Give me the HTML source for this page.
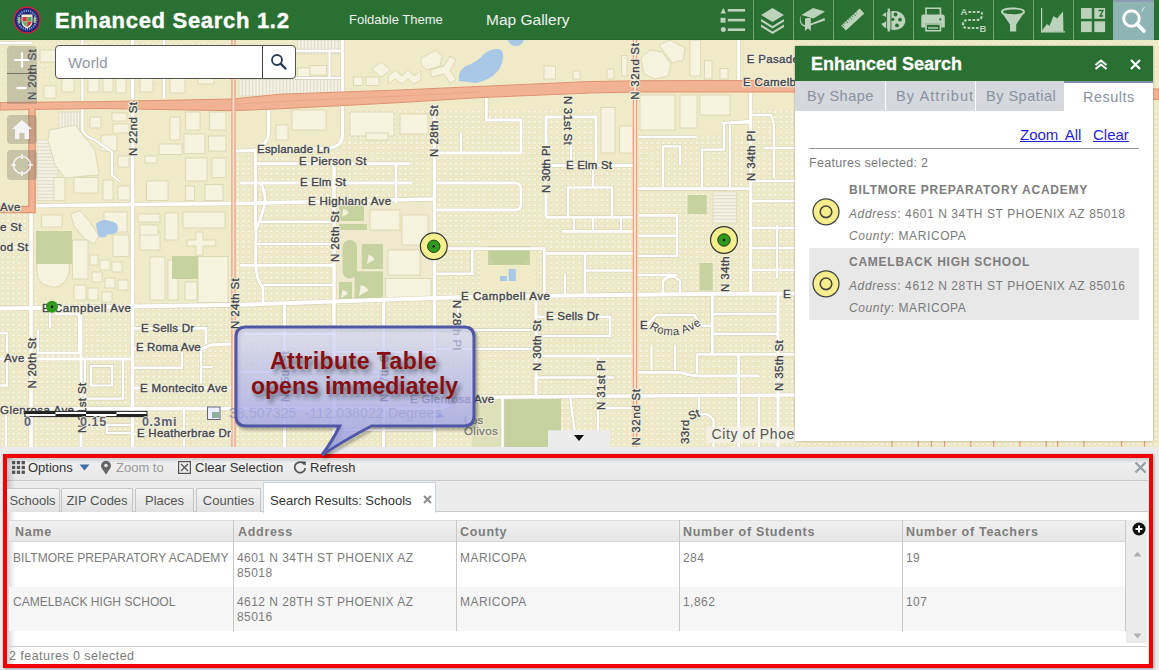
<!DOCTYPE html>
<html><head><meta charset="utf-8">
<style>
*{box-sizing:border-box;margin:0;padding:0}
html,body{width:1159px;height:670px;overflow:hidden;background:#ebebeb;font-family:"Liberation Sans",sans-serif}
.abs{position:absolute}
#map{position:absolute;left:0;top:40px;width:1159px;height:407px;overflow:hidden;background:#eeeacb}
#hdr{position:absolute;left:0;top:0;width:1159px;height:40px;background:#2a7033;border-bottom:1px solid #236b2b}
#title{position:absolute;left:55px;top:8px;-webkit-text-stroke:0.4px #fff;font:bold 22px "Liberation Sans",sans-serif;letter-spacing:0.7px;color:#fff;white-space:nowrap}
.hlink{position:absolute;color:#f0f0f0;white-space:nowrap}
.dv{position:absolute;top:0;width:1px;height:40px;background:#6ea571}
#panel{position:absolute;left:795px;top:46px;width:358px;height:395px;background:#fff;box-shadow:0 0 2px rgba(0,0,0,.35)}
.ptab{position:absolute;top:35px;height:30px;background:#d5d8dc;color:#8a92a2;font-size:14.5px;letter-spacing:0.5px;white-space:nowrap;overflow:hidden;line-height:30px}
.gt{color:#7a7a7a;white-space:nowrap;position:absolute}
.it{font-style:italic}
#att{position:absolute;left:0;top:447px;width:1159px;height:223px;background:#ebebeb}
.cell{position:absolute;font-size:12px;color:#7b7b7b;white-space:nowrap;line-height:15px;letter-spacing:0.45px}
.hcell{position:absolute;font:bold 12.5px "Liberation Sans",sans-serif;color:#7d7d7d;letter-spacing:0.7px;white-space:nowrap;top:525px}
.ttab{position:absolute;top:488px;height:24px;background:linear-gradient(#f4f4f4,#e2e2e2);border:1px solid #c6c6c6;border-bottom:none;font-size:13px;color:#555;line-height:23px;text-align:center;white-space:nowrap;border-radius:2px 2px 0 0}
.tbt{position:absolute;top:460px;font-size:13px;color:#333;white-space:nowrap;line-height:16px}
.ml{position:absolute;font-size:11.5px;color:#5d6068;white-space:nowrap;letter-spacing:0.9px;line-height:12px}
.mlv{position:absolute;font-size:11.5px;color:#5d6068;white-space:nowrap;letter-spacing:0.9px;line-height:12px;transform-origin:0 0}
</style></head><body>

<div id="map">
<svg id="msvg" width="1159" height="407" viewBox="0 40 1159 407" style="position:absolute;left:0;top:0">
<rect x="0" y="40" width="1159" height="407" fill="#efebc8"/>
<defs>
<pattern id="houses" x="0" y="0" width="5.6" height="5.2" patternUnits="userSpaceOnUse">
<rect x="0.9" y="0.9" width="3.4" height="2.8" fill="#faf7e3" stroke="#dcd6b0" stroke-width="0.5"/>
</pattern>
</defs>
<rect x="0" y="110" width="1159" height="337" fill="url(#houses)"/>
<rect x="0" y="40" width="1159" height="45" fill="url(#houses)" opacity="0.5"/>
<rect x="36" y="110" width="196" height="95" fill="#efebc8" />
<rect x="0" y="110" width="31" height="95" fill="#efebc8" />
<rect x="134" y="208" width="98" height="95" fill="#efebc8" />
<rect x="36" y="208" width="95" height="95" fill="#efebc8" />
<rect x="336" y="205" width="98" height="95" fill="#efebc8" />
<rect x="234" y="40" width="246" height="46" fill="#efebc8" />
<rect x="480" y="40" width="154" height="42" fill="#efebc8" />
<rect x="636" y="40" width="159" height="40" fill="#efebc8" />
<rect x="598" y="95" width="36" height="65" fill="#efebc8" />
<rect x="636" y="92" width="112" height="43" fill="#efebc8" />
<rect x="472" y="397" width="30" height="50" fill="#efebc8" />
<rect x="234" y="110" width="106" height="40" fill="#efebc8" />
<rect x="480" y="240" width="55" height="50" fill="#efebc8" />
<rect x="334" y="203" width="100" height="97" fill="#efeacd" />
<rect x="59" y="112" width="20.5" height="18" fill="#f3f0e4" stroke="#d8d3bc" stroke-width="0.6"/>
<path d="M62.0,112 V130" stroke="#d2cdb4" stroke-width="0.6"/>
<path d="M65.0,112 V130" stroke="#d2cdb4" stroke-width="0.6"/>
<path d="M68.0,112 V130" stroke="#d2cdb4" stroke-width="0.6"/>
<path d="M71.0,112 V130" stroke="#d2cdb4" stroke-width="0.6"/>
<path d="M74.0,112 V130" stroke="#d2cdb4" stroke-width="0.6"/>
<path d="M77.0,112 V130" stroke="#d2cdb4" stroke-width="0.6"/>
<rect x="37" y="140" width="21" height="60.5" fill="#f3f0e4" stroke="#d8d3bc" stroke-width="0.6"/>
<path d="M37,143.4 H58" stroke="#d2cdb4" stroke-width="0.6"/>
<path d="M37,146.8 H58" stroke="#d2cdb4" stroke-width="0.6"/>
<path d="M37,150.2 H58" stroke="#d2cdb4" stroke-width="0.6"/>
<path d="M37,153.6 H58" stroke="#d2cdb4" stroke-width="0.6"/>
<path d="M37,157.0 H58" stroke="#d2cdb4" stroke-width="0.6"/>
<path d="M37,160.4 H58" stroke="#d2cdb4" stroke-width="0.6"/>
<path d="M37,163.8 H58" stroke="#d2cdb4" stroke-width="0.6"/>
<path d="M37,167.2 H58" stroke="#d2cdb4" stroke-width="0.6"/>
<path d="M37,170.6 H58" stroke="#d2cdb4" stroke-width="0.6"/>
<path d="M37,174.0 H58" stroke="#d2cdb4" stroke-width="0.6"/>
<path d="M37,177.4 H58" stroke="#d2cdb4" stroke-width="0.6"/>
<path d="M37,180.8 H58" stroke="#d2cdb4" stroke-width="0.6"/>
<path d="M37,184.2 H58" stroke="#d2cdb4" stroke-width="0.6"/>
<path d="M37,187.6 H58" stroke="#d2cdb4" stroke-width="0.6"/>
<path d="M37,191.0 H58" stroke="#d2cdb4" stroke-width="0.6"/>
<path d="M37,194.4 H58" stroke="#d2cdb4" stroke-width="0.6"/>
<path d="M37,197.8 H58" stroke="#d2cdb4" stroke-width="0.6"/>
<rect x="239" y="78.4" width="104" height="17.599999999999994" fill="#f3f0e4" stroke="#d8d3bc" stroke-width="0.6"/>
<path d="M242.4,78.4 V96" stroke="#d2cdb4" stroke-width="0.6"/>
<path d="M245.8,78.4 V96" stroke="#d2cdb4" stroke-width="0.6"/>
<path d="M249.2,78.4 V96" stroke="#d2cdb4" stroke-width="0.6"/>
<path d="M252.6,78.4 V96" stroke="#d2cdb4" stroke-width="0.6"/>
<path d="M256.0,78.4 V96" stroke="#d2cdb4" stroke-width="0.6"/>
<path d="M259.4,78.4 V96" stroke="#d2cdb4" stroke-width="0.6"/>
<path d="M262.8,78.4 V96" stroke="#d2cdb4" stroke-width="0.6"/>
<path d="M266.2,78.4 V96" stroke="#d2cdb4" stroke-width="0.6"/>
<path d="M269.6,78.4 V96" stroke="#d2cdb4" stroke-width="0.6"/>
<path d="M273.0,78.4 V96" stroke="#d2cdb4" stroke-width="0.6"/>
<path d="M276.4,78.4 V96" stroke="#d2cdb4" stroke-width="0.6"/>
<path d="M279.8,78.4 V96" stroke="#d2cdb4" stroke-width="0.6"/>
<path d="M283.2,78.4 V96" stroke="#d2cdb4" stroke-width="0.6"/>
<path d="M286.6,78.4 V96" stroke="#d2cdb4" stroke-width="0.6"/>
<path d="M290.0,78.4 V96" stroke="#d2cdb4" stroke-width="0.6"/>
<path d="M293.4,78.4 V96" stroke="#d2cdb4" stroke-width="0.6"/>
<path d="M296.8,78.4 V96" stroke="#d2cdb4" stroke-width="0.6"/>
<path d="M300.2,78.4 V96" stroke="#d2cdb4" stroke-width="0.6"/>
<path d="M303.6,78.4 V96" stroke="#d2cdb4" stroke-width="0.6"/>
<path d="M307.0,78.4 V96" stroke="#d2cdb4" stroke-width="0.6"/>
<path d="M310.4,78.4 V96" stroke="#d2cdb4" stroke-width="0.6"/>
<path d="M313.8,78.4 V96" stroke="#d2cdb4" stroke-width="0.6"/>
<path d="M317.2,78.4 V96" stroke="#d2cdb4" stroke-width="0.6"/>
<path d="M320.6,78.4 V96" stroke="#d2cdb4" stroke-width="0.6"/>
<path d="M324.0,78.4 V96" stroke="#d2cdb4" stroke-width="0.6"/>
<path d="M327.4,78.4 V96" stroke="#d2cdb4" stroke-width="0.6"/>
<path d="M330.8,78.4 V96" stroke="#d2cdb4" stroke-width="0.6"/>
<path d="M334.2,78.4 V96" stroke="#d2cdb4" stroke-width="0.6"/>
<path d="M337.6,78.4 V96" stroke="#d2cdb4" stroke-width="0.6"/>
<path d="M341.0,78.4 V96" stroke="#d2cdb4" stroke-width="0.6"/>
<rect x="297.5" y="40" width="46.5" height="14" fill="#f3f0e4" stroke="#d8d3bc" stroke-width="0.6"/>
<path d="M300.9,40 V54" stroke="#d2cdb4" stroke-width="0.6"/>
<path d="M304.3,40 V54" stroke="#d2cdb4" stroke-width="0.6"/>
<path d="M307.7,40 V54" stroke="#d2cdb4" stroke-width="0.6"/>
<path d="M311.1,40 V54" stroke="#d2cdb4" stroke-width="0.6"/>
<path d="M314.5,40 V54" stroke="#d2cdb4" stroke-width="0.6"/>
<path d="M317.9,40 V54" stroke="#d2cdb4" stroke-width="0.6"/>
<path d="M321.3,40 V54" stroke="#d2cdb4" stroke-width="0.6"/>
<path d="M324.7,40 V54" stroke="#d2cdb4" stroke-width="0.6"/>
<path d="M328.1,40 V54" stroke="#d2cdb4" stroke-width="0.6"/>
<path d="M331.5,40 V54" stroke="#d2cdb4" stroke-width="0.6"/>
<path d="M334.9,40 V54" stroke="#d2cdb4" stroke-width="0.6"/>
<path d="M338.3,40 V54" stroke="#d2cdb4" stroke-width="0.6"/>
<path d="M341.7,40 V54" stroke="#d2cdb4" stroke-width="0.6"/>
<rect x="713" y="192" width="23.600000000000023" height="31" fill="#f3f0e4" stroke="#d8d3bc" stroke-width="0.6"/>
<path d="M713,195.4 H736.6" stroke="#d2cdb4" stroke-width="0.6"/>
<path d="M713,198.8 H736.6" stroke="#d2cdb4" stroke-width="0.6"/>
<path d="M713,202.2 H736.6" stroke="#d2cdb4" stroke-width="0.6"/>
<path d="M713,205.6 H736.6" stroke="#d2cdb4" stroke-width="0.6"/>
<path d="M713,209.0 H736.6" stroke="#d2cdb4" stroke-width="0.6"/>
<path d="M713,212.4 H736.6" stroke="#d2cdb4" stroke-width="0.6"/>
<path d="M713,215.8 H736.6" stroke="#d2cdb4" stroke-width="0.6"/>
<path d="M713,219.2 H736.6" stroke="#d2cdb4" stroke-width="0.6"/>
<rect x="90" y="117" width="11" height="11" fill="#f6f3de" stroke="#d6d0a8" stroke-width="0.7"/>
<rect x="112" y="113" width="15" height="8" fill="#f6f3de" stroke="#d6d0a8" stroke-width="0.7"/>
<rect x="113" y="124" width="16" height="9" fill="#f6f3de" stroke="#d6d0a8" stroke-width="0.7"/>
<rect x="101" y="135" width="16" height="16" fill="#f6f3de" stroke="#d6d0a8" stroke-width="0.7"/>
<rect x="118" y="156" width="11" height="11" fill="#f6f3de" stroke="#d6d0a8" stroke-width="0.7"/>
<rect x="54" y="177.5" width="11" height="23.0" fill="#f6f3de" stroke="#d6d0a8" stroke-width="0.7"/>
<rect x="74" y="177.5" width="24" height="15.5" fill="#f6f3de" stroke="#d6d0a8" stroke-width="0.7"/>
<rect x="170" y="117" width="10" height="23" fill="#f6f3de" stroke="#d6d0a8" stroke-width="0.7"/>
<rect x="185.6" y="112" width="14.400000000000006" height="18" fill="#f6f3de" stroke="#d6d0a8" stroke-width="0.7"/>
<rect x="209.5" y="112" width="16.5" height="18" fill="#f6f3de" stroke="#d6d0a8" stroke-width="0.7"/>
<rect x="184" y="134" width="21" height="19.599999999999994" fill="#f6f3de" stroke="#d6d0a8" stroke-width="0.7"/>
<rect x="208.6" y="136" width="17.400000000000006" height="15" fill="#f6f3de" stroke="#d6d0a8" stroke-width="0.7"/>
<rect x="159" y="144" width="23" height="10.5" fill="#f6f3de" stroke="#d6d0a8" stroke-width="0.7"/>
<rect x="145" y="156" width="12" height="7" fill="#f6f3de" stroke="#d6d0a8" stroke-width="0.7"/>
<rect x="185.6" y="158" width="21.400000000000006" height="23" fill="#f6f3de" stroke="#d6d0a8" stroke-width="0.7"/>
<rect x="212" y="158" width="14" height="19.5" fill="#f6f3de" stroke="#d6d0a8" stroke-width="0.7"/>
<rect x="146.7" y="181" width="21.30000000000001" height="19.5" fill="#f6f3de" stroke="#d6d0a8" stroke-width="0.7"/>
<rect x="205" y="184.6" width="18" height="15.900000000000006" fill="#f6f3de" stroke="#d6d0a8" stroke-width="0.7"/>
<rect x="185.6" y="186" width="8.900000000000006" height="14.5" fill="#f6f3de" stroke="#d6d0a8" stroke-width="0.7"/>
<rect x="103" y="180" width="10" height="20" fill="#f6f3de" stroke="#d6d0a8" stroke-width="0.7"/>
<rect x="118" y="186" width="12" height="14" fill="#f6f3de" stroke="#d6d0a8" stroke-width="0.7"/>
<rect x="40" y="50" width="16" height="12" fill="#f6f3de" stroke="#d6d0a8" stroke-width="0.7"/>
<rect x="62" y="76" width="12" height="16" fill="#f6f3de" stroke="#d6d0a8" stroke-width="0.7"/>
<rect x="88" y="77" width="11" height="15" fill="#f6f3de" stroke="#d6d0a8" stroke-width="0.7"/>
<rect x="103" y="75" width="10" height="17" fill="#f6f3de" stroke="#d6d0a8" stroke-width="0.7"/>
<rect x="116" y="70" width="10" height="23" fill="#f6f3de" stroke="#d6d0a8" stroke-width="0.7"/>
<rect x="140" y="72" width="13" height="20" fill="#f6f3de" stroke="#d6d0a8" stroke-width="0.7"/>
<rect x="170" y="72" width="15" height="21" fill="#f6f3de" stroke="#d6d0a8" stroke-width="0.7"/>
<rect x="198" y="68" width="16" height="16" fill="#f6f3de" stroke="#d6d0a8" stroke-width="0.7"/>
<rect x="44" y="86" width="12" height="12" fill="#f6f3de" stroke="#d6d0a8" stroke-width="0.7"/>
<rect x="185" y="52" width="15" height="12" fill="#f6f3de" stroke="#d6d0a8" stroke-width="0.7"/>
<rect x="110" y="50" width="15" height="12" fill="#f6f3de" stroke="#d6d0a8" stroke-width="0.7"/>
<rect x="297.5" y="68" width="12.5" height="11.599999999999994" fill="#f6f3de" stroke="#d6d0a8" stroke-width="0.7"/>
<rect x="310" y="65.6" width="16.69999999999999" height="9.400000000000006" fill="#f6f3de" stroke="#d6d0a8" stroke-width="0.7"/>
<rect x="353.5" y="77" width="9.300000000000011" height="8.400000000000006" fill="#f6f3de" stroke="#d6d0a8" stroke-width="0.7"/>
<rect x="366" y="77" width="13" height="8.400000000000006" fill="#f6f3de" stroke="#d6d0a8" stroke-width="0.7"/>
<rect x="544" y="66" width="11.600000000000023" height="13" fill="#f6f3de" stroke="#d6d0a8" stroke-width="0.7"/>
<rect x="573" y="71" width="7" height="8" fill="#f6f3de" stroke="#d6d0a8" stroke-width="0.7"/>
<rect x="621.7" y="55.5" width="5.2999999999999545" height="20.5" fill="#f6f3de" stroke="#d6d0a8" stroke-width="0.7"/>
<rect x="607" y="69" width="7" height="10" fill="#f6f3de" stroke="#d6d0a8" stroke-width="0.7"/>
<rect x="704.5" y="60.7" width="7.5" height="18.299999999999997" fill="#f6f3de" stroke="#d6d0a8" stroke-width="0.7"/>
<rect x="720" y="68.5" width="8" height="10.5" fill="#f6f3de" stroke="#d6d0a8" stroke-width="0.7"/>
<rect x="690" y="40" width="10.600000000000023" height="36" fill="#f6f3de" stroke="#d6d0a8" stroke-width="0.7"/>
<rect x="41.5" y="215" width="20.5" height="12" fill="#f6f3de" stroke="#d6d0a8" stroke-width="0.7"/>
<rect x="72.4" y="240" width="15.599999999999994" height="39" fill="#f6f3de" stroke="#d6d0a8" stroke-width="0.7"/>
<rect x="113" y="235" width="16" height="21.600000000000023" fill="#f6f3de" stroke="#d6d0a8" stroke-width="0.7"/>
<rect x="104" y="212" width="23" height="20" fill="#f6f3de" stroke="#d6d0a8" stroke-width="0.7"/>
<rect x="90" y="255" width="8" height="10" fill="#f6f3de" stroke="#d6d0a8" stroke-width="0.7"/>
<rect x="100" y="260" width="10" height="10" fill="#f6f3de" stroke="#d6d0a8" stroke-width="0.7"/>
<rect x="112" y="262" width="10" height="10" fill="#f6f3de" stroke="#d6d0a8" stroke-width="0.7"/>
<rect x="92" y="272" width="10" height="10" fill="#f6f3de" stroke="#d6d0a8" stroke-width="0.7"/>
<rect x="105" y="278" width="10" height="10" fill="#f6f3de" stroke="#d6d0a8" stroke-width="0.7"/>
<rect x="118" y="280" width="10" height="10" fill="#f6f3de" stroke="#d6d0a8" stroke-width="0.7"/>
<rect x="88" y="288" width="10" height="12" fill="#f6f3de" stroke="#d6d0a8" stroke-width="0.7"/>
<rect x="102" y="292" width="10" height="10" fill="#f6f3de" stroke="#d6d0a8" stroke-width="0.7"/>
<rect x="74" y="285" width="12" height="15" fill="#f6f3de" stroke="#d6d0a8" stroke-width="0.7"/>
<rect x="138" y="214" width="22" height="8" fill="#f6f3de" stroke="#d6d0a8" stroke-width="0.7"/>
<rect x="165" y="213" width="13" height="27" fill="#f6f3de" stroke="#d6d0a8" stroke-width="0.7"/>
<rect x="183" y="212" width="42" height="16" fill="#f6f3de" stroke="#d6d0a8" stroke-width="0.7"/>
<rect x="140" y="232" width="20" height="18" fill="#f6f3de" stroke="#d6d0a8" stroke-width="0.7"/>
<rect x="150" y="257" width="15" height="43" fill="#f6f3de" stroke="#d6d0a8" stroke-width="0.7"/>
<rect x="168" y="260" width="10" height="40" fill="#f6f3de" stroke="#d6d0a8" stroke-width="0.7"/>
<rect x="185" y="282" width="12" height="18" fill="#f6f3de" stroke="#d6d0a8" stroke-width="0.7"/>
<rect x="198" y="256.6" width="30" height="46.0" fill="#f6f3de" stroke="#d6d0a8" stroke-width="0.7"/>
<rect x="140" y="225" width="18" height="10" fill="#f6f3de" stroke="#d6d0a8" stroke-width="0.7"/>
<rect x="601" y="107.5" width="14" height="45.5" fill="#f6f3de" stroke="#d6d0a8" stroke-width="0.7"/>
<rect x="619.7" y="126" width="13.299999999999955" height="27" fill="#f6f3de" stroke="#d6d0a8" stroke-width="0.7"/>
<rect x="640" y="95" width="35" height="35" fill="#f6f3de" stroke="#d6d0a8" stroke-width="0.7"/>
<rect x="680" y="95" width="17" height="33" fill="#f6f3de" stroke="#d6d0a8" stroke-width="0.7"/>
<rect x="700" y="95" width="30" height="20" fill="#f6f3de" stroke="#d6d0a8" stroke-width="0.7"/>
<rect x="292" y="110" width="34" height="20" fill="#f6f3de" stroke="#d6d0a8" stroke-width="0.7"/>
<rect x="276" y="125" width="12" height="15" fill="#f6f3de" stroke="#d6d0a8" stroke-width="0.7"/>
<rect x="350" y="112" width="44" height="24" fill="#f6f3de" stroke="#d6d0a8" stroke-width="0.7"/>
<rect x="400" y="114" width="28" height="20" fill="#f6f3de" stroke="#d6d0a8" stroke-width="0.7"/>
<rect x="366" y="133" width="22" height="7" fill="#f6f3de" stroke="#d6d0a8" stroke-width="0.7"/>
<rect x="385.6" y="278.6" width="45.39999999999998" height="19.099999999999966" fill="#f6f3de" stroke="#d6d0a8" stroke-width="0.7"/>
<rect x="370" y="210" width="30" height="20" fill="#f6f3de" stroke="#d6d0a8" stroke-width="0.7"/>
<rect x="402" y="215" width="26" height="30" fill="#f6f3de" stroke="#d6d0a8" stroke-width="0.7"/>
<rect x="388" y="250" width="32" height="25" fill="#f6f3de" stroke="#d6d0a8" stroke-width="0.7"/>
<path d="M49.5,130 L75,125 L95,150 L99,175 L85,176 L65,178 L55,165 L48,140 Z" fill="#f6f3de" stroke="#d6d0a8" stroke-width="0.7"/>
<path d="M70.7,214 L80,210.6 L90,222 L99,236 L94,244 L84,238 L74,226 Z" fill="#f6f3de" stroke="#d6d0a8" stroke-width="0.7"/>
<path d="M372,69 L381,62 L390.7,70 L381,77 Z" fill="#f6f3de" stroke="#d6d0a8" stroke-width="0.7"/>
<path d="M388.4,76 L395,70 L402,76 L408,70 L414,76 L421,71 L421,80 L414,84 L408,79 L402,84 L395,79 L388.4,84 Z" fill="#f6f3de" stroke="#d6d0a8" stroke-width="0.7"/>
<path d="M421,58 L436,50.5 L442,56 L440,66 L426,70 L421,64 Z" fill="#f6f3de" stroke="#d6d0a8" stroke-width="0.7"/>
<path d="M430,70 L444,66 L450,56 L456,60 L450,70 L456,80 L450,83 L444,74 L432,77 Z" fill="#f6f3de" stroke="#d6d0a8" stroke-width="0.7"/>
<path d="M641,58 L650,50 L662,52 L671,64 L668,76 L655,79 L644,74 Z" fill="#f6f3de" stroke="#d6d0a8" stroke-width="0.7"/>
<path d="M659,45 L670,40 L685,48 L683,60 L672,63 Z" fill="#f6f3de" stroke="#d6d0a8" stroke-width="0.7"/>
<path d="M187,240 L196,240 L196,232 L203,232 L203,240 L215.7,240 L215.7,246 L203,246 L203,255 L196,255 L196,246 L187,246 Z" fill="#f6f3de" stroke="#d6d0a8" stroke-width="0.7"/>
<path d="M37,265 Q40,253 52,256 Q60,250 68,258 Q72,270 66,280 Q60,290 48,286 Q38,284 37,272 Z" fill="#f6f3de" stroke="#d6d0a8" stroke-width="0.7"/>
<rect x="36" y="231" width="36" height="33" fill="#c6d3a1" />
<rect x="172" y="256" width="26" height="23" fill="#c6d3a1" />
<rect x="339" y="204.5" width="25" height="16.5" fill="#c6d3a1" />
<rect x="339" y="224" width="28" height="6" fill="#c6d3a1" />
<rect x="361.7" y="244" width="21.30000000000001" height="25" fill="#c6d3a1" />
<rect x="354.6" y="271.4" width="28.399999999999977" height="27.600000000000023" fill="#c6d3a1" />
<rect x="339" y="282" width="13" height="17" fill="#c6d3a1" />
<rect x="488" y="246" width="42" height="19" fill="#c6d3a1" />
<rect x="687.6" y="195" width="19.100000000000023" height="19" fill="#c6d3a1" />
<rect x="699.6" y="263" width="13.100000000000023" height="27.5" fill="#c6d3a1" />
<rect x="502.5" y="397" width="58.5" height="50" fill="#c6d3a1" />
<rect x="342.6" y="240" width="14.4" height="38.6" rx="7" fill="#c6d3a1"/>
<rect x="490" y="247" width="38" height="17" rx="8" fill="#bfcf98"/>
<rect x="472" y="397" width="30.5" height="50" fill="#dde0b8" />
<path d="M367,264 L373.3,257.7 A9,9 0 0 0 366.1,255.0 Z" fill="#f4f2df" transform="rotate(15 367 264)"/>
<path d="M359,296 L366.7,288.3 A11,11 0 0 0 357.9,285.0 Z" fill="#f4f2df" transform="rotate(15 359 296)"/>
<path d="M341,298 L346.6,292.4 A8,8 0 0 0 340.2,290.0 Z" fill="#f4f2df" transform="rotate(15 341 298)"/>
<path d="M342,217 L347.6,211.4 A8,8 0 0 0 341.2,209.0 Z" fill="#f4f2df" transform="rotate(15 342 217)"/>
<path d="M459,81 Q457,71 466,66 Q477,62 483,55 Q490,48 499,49 Q504,51 503,58 Q502,66 497,72 Q490,80 476,83 Z" fill="#a9c8e8"/>
<path d="M508,40 H524 Q522,46 515,46 Q509,45 508,40 Z" fill="#a9c8e8"/>
<path d="M96,224 Q102,218 110,221 Q119,222 118,230 Q114,236 108,234 Q104,240 98,236 Z" fill="#a9c8e8"/>
<rect x="508.6" y="269" width="7.199999999999932" height="12" fill="#a9c8e8" />
<rect x="500" y="276" width="7" height="5" fill="#a9c8e8" />
<g fill="none" stroke="#d8d3bc" stroke-linecap="butt">
<path d="M0,43 H32" stroke-width="3.8"/>
<path d="M571,145 V165.5" stroke-width="3.5999999999999996"/>
<path d="M31,210 V447" stroke-width="4.8"/>
<path d="M132.5,40 V447" stroke-width="4.8"/>
<path d="M334,157 V447" stroke-width="4.8"/>
<path d="M434.5,108 V447" stroke-width="4.8"/>
<path d="M750.7,93 V294" stroke-width="4.4"/>
<path d="M778,294 V447" stroke-width="4.4"/>
<path d="M738.7,40 V80" stroke-width="4.2"/>
<path d="M35,205.7 L240,203.4 L434,199" stroke-width="4.8"/>
<path d="M0,308.4 L240,304.8 L480,296.5 L720,293.8 L800,293.6" stroke-width="5.2"/>
<path d="M0,409 L440,408 L480,397.2 L634,396 L795,395" stroke-width="4.8"/>
<path d="M236,151 L330,148 Q342,146 342.6,135 V40" stroke-width="4.4"/>
<path d="M164,40 V98" stroke-width="3.8"/>
<path d="M82.4,40 V130" stroke-width="3.5999999999999996"/>
<path d="M82.4,130 Q84,136 95,140 L112,152 V175 L120,182" stroke-width="3.4000000000000004"/>
<path d="M240,50.7 H342" stroke-width="3.8"/>
<path d="M329.5,50 V78" stroke-width="3.4000000000000004"/>
<path d="M240,78 H342" stroke-width="3.4000000000000004"/>
<path d="M268.6,110 L268.6,133 Q268,145 254,150" stroke-width="4.0"/>
<path d="M255.5,150 V230" stroke-width="4.2"/>
<path d="M255.5,163.7 H409.5" stroke-width="4.2"/>
<path d="M240,183 H412" stroke-width="4.2"/>
<path d="M396,163.7 V203" stroke-width="3.8"/>
<path d="M261,183 Q266,195 265,203 Q262,215 256,230 L255.5,261.5 Q256,280 263,288 L263,306" stroke-width="4.0"/>
<path d="M259.4,221.7 H334" stroke-width="3.8"/>
<path d="M255.5,244 H334" stroke-width="3.8"/>
<path d="M240,265.4 H334" stroke-width="3.8"/>
<path d="M263.3,285 H334" stroke-width="3.8"/>
<path d="M486.4,97 V120 H521 V153" stroke-width="4.0"/>
<path d="M436,153 H521" stroke-width="4.0"/>
<path d="M461,132.6 V153" stroke-width="3.5999999999999996"/>
<path d="M436,183 H515 Q521,183 521,190 V204 Q521,210 515,210 H436" stroke-width="4.0"/>
<path d="M546,117 H596 V163" stroke-width="4.0"/>
<path d="M546,117 V217.3" stroke-width="4.2"/>
<path d="M546,165.5 H634" stroke-width="4.2"/>
<path d="M593,165.5 V187.5 M568,217 V187.5 H612 V217" stroke-width="3.5999999999999996"/>
<path d="M546,217.3 H634" stroke-width="4.0"/>
<path d="M562,231.4 H634" stroke-width="3.8"/>
<path d="M574,217 V231.4" stroke-width="3.4000000000000004"/>
<path d="M593,217 V231.4" stroke-width="3.4000000000000004"/>
<path d="M621,217 V231.4" stroke-width="3.4000000000000004"/>
<path d="M445.7,248.6 H544.4 V297" stroke-width="4.0"/>
<path d="M472.3,248.6 V273.7 H436" stroke-width="3.8"/>
<path d="M546,253.3 H634" stroke-width="4.0"/>
<path d="M585,253.3 V296" stroke-width="3.8"/>
<path d="M585,270.5 H634" stroke-width="3.8"/>
<path d="M565,273.7 V296" stroke-width="3.5999999999999996"/>
<path d="M638,137 H696" stroke-width="3.8"/>
<path d="M638,188.7 H750.7" stroke-width="4.0"/>
<path d="M638,215.4 H677 V256 H638" stroke-width="3.8"/>
<path d="M638,235.8 H677" stroke-width="3.5999999999999996"/>
<path d="M663,187 V146.4 H680 V165" stroke-width="3.5999999999999996"/>
<path d="M702,187 V149.6 H724 V123 L750.7,121" stroke-width="3.5999999999999996"/>
<path d="M730,124.5 V187" stroke-width="3.4000000000000004"/>
<path d="M663,293.8 V281 Q671,272 680,281 V293.8" stroke-width="3.5999999999999996"/>
<path d="M638,275 H677" stroke-width="3.5999999999999996"/>
<path d="M750.7,115 H771 Q774,120 774,130 V178" stroke-width="3.5999999999999996"/>
<path d="M765,148 H795" stroke-width="3.5999999999999996"/>
<path d="M750.7,181 H795" stroke-width="3.5999999999999996"/>
<path d="M750.7,201 H795" stroke-width="3.5999999999999996"/>
<path d="M750.7,228 H795" stroke-width="3.5999999999999996"/>
<path d="M750.7,248 H795" stroke-width="3.5999999999999996"/>
<path d="M750.7,270 H795" stroke-width="3.5999999999999996"/>
<path d="M777,225 V278" stroke-width="3.4000000000000004"/>
<path d="M721.5,123 H752" stroke-width="3.4000000000000004"/>
<path d="M55,314 H79 V353 H38 V330" stroke-width="3.5999999999999996"/>
<path d="M81,308 V447" stroke-width="4.2"/>
<path d="M50,308 V328" stroke-width="3.4000000000000004"/>
<path d="M0,359 H132.5" stroke-width="4.2"/>
<path d="M0,333 H7 V385.5 H0" stroke-width="3.5999999999999996"/>
<path d="M85,359 V398.6 H123 V359" stroke-width="3.5999999999999996"/>
<path d="M91,366 H112 V385.5 H91 Z" stroke-width="3.4000000000000004"/>
<path d="M6,409 V447" stroke-width="3.8"/>
<path d="M184,409 V447" stroke-width="3.8"/>
<path d="M132.5,425 H107 V433 H132.5" stroke-width="3.4000000000000004"/>
<path d="M132.5,328.3 H206 V344.2" stroke-width="4.0"/>
<path d="M132.5,348.6 H202.3 L211,345 L231.5,344" stroke-width="4.0"/>
<path d="M132.5,367.7 H182 V348.6" stroke-width="3.5999999999999996"/>
<path d="M201,348.6 V383.5" stroke-width="3.5999999999999996"/>
<path d="M202,367 H212.5" stroke-width="3.4000000000000004"/>
<path d="M132.5,388 H232" stroke-width="4.0"/>
<path d="M132.5,434 H232" stroke-width="3.8"/>
<path d="M0,247.5 H31" stroke-width="3.8"/>
<path d="M284.5,305 V447" stroke-width="4.2"/>
<path d="M383.6,300 V447" stroke-width="4.2"/>
<path d="M240,334 H334" stroke-width="3.5999999999999996"/>
<path d="M334,352 H434" stroke-width="3.5999999999999996"/>
<path d="M240,372 H434" stroke-width="3.5999999999999996"/>
<path d="M334,430 H434" stroke-width="3.4000000000000004"/>
<path d="M434.5,349 H536" stroke-width="3.8"/>
<path d="M536,296 V397" stroke-width="4.4"/>
<path d="M536,316.7 H610 V336 H536" stroke-width="3.8"/>
<path d="M536,356 H634" stroke-width="4.0"/>
<path d="M536,377.5 H614" stroke-width="3.8"/>
<path d="M458,297 V349" stroke-width="3.5999999999999996"/>
<path d="M472,349 V397" stroke-width="3.5999999999999996"/>
<path d="M436,330 H536" stroke-width="3.4000000000000004"/>
<path d="M570,396 Q573,420 577,447" stroke-width="3.5999999999999996"/>
<path d="M598,356 V447" stroke-width="3.8"/>
<path d="M595,408 H634" stroke-width="3.5999999999999996"/>
<path d="M502.5,397 V447" stroke-width="3.8"/>
<path d="M712.3,293.6 V354.4" stroke-width="4.0"/>
<path d="M712,314 H778" stroke-width="3.8"/>
<path d="M712,334 H778" stroke-width="3.8"/>
<path d="M697,354.4 H795" stroke-width="4.0"/>
<path d="M697,354 V373.5" stroke-width="3.5999999999999996"/>
<path d="M638,372.3 H680 Q690,376 700,376 H759" stroke-width="4.0"/>
<path d="M738.6,354 V447" stroke-width="4.0"/>
<path d="M651.5,346 V370" stroke-width="3.4000000000000004"/>
<path d="M675,346 V370" stroke-width="3.4000000000000004"/>
<path d="M646.7,325.8 L656,315 H694.4 L701.6,325.8 H712" stroke-width="3.8"/>
<path d="M699,395 V416.5 Q706,410 713.5,420 V447" stroke-width="3.5999999999999996"/>
<path d="M759,395 V447" stroke-width="3.8"/>
</g><g fill="none" stroke="#ffffff" stroke-linecap="butt">
<path d="M0,43 H32" stroke-width="2.6"/>
<path d="M571,145 V165.5" stroke-width="2.4"/>
<path d="M31,210 V447" stroke-width="3.6"/>
<path d="M132.5,40 V447" stroke-width="3.6"/>
<path d="M334,157 V447" stroke-width="3.6"/>
<path d="M434.5,108 V447" stroke-width="3.6"/>
<path d="M750.7,93 V294" stroke-width="3.2"/>
<path d="M778,294 V447" stroke-width="3.2"/>
<path d="M738.7,40 V80" stroke-width="3"/>
<path d="M35,205.7 L240,203.4 L434,199" stroke-width="3.6"/>
<path d="M0,308.4 L240,304.8 L480,296.5 L720,293.8 L800,293.6" stroke-width="4"/>
<path d="M0,409 L440,408 L480,397.2 L634,396 L795,395" stroke-width="3.6"/>
<path d="M236,151 L330,148 Q342,146 342.6,135 V40" stroke-width="3.2"/>
<path d="M164,40 V98" stroke-width="2.6"/>
<path d="M82.4,40 V130" stroke-width="2.4"/>
<path d="M82.4,130 Q84,136 95,140 L112,152 V175 L120,182" stroke-width="2.2"/>
<path d="M240,50.7 H342" stroke-width="2.6"/>
<path d="M329.5,50 V78" stroke-width="2.2"/>
<path d="M240,78 H342" stroke-width="2.2"/>
<path d="M268.6,110 L268.6,133 Q268,145 254,150" stroke-width="2.8"/>
<path d="M255.5,150 V230" stroke-width="3"/>
<path d="M255.5,163.7 H409.5" stroke-width="3"/>
<path d="M240,183 H412" stroke-width="3"/>
<path d="M396,163.7 V203" stroke-width="2.6"/>
<path d="M261,183 Q266,195 265,203 Q262,215 256,230 L255.5,261.5 Q256,280 263,288 L263,306" stroke-width="2.8"/>
<path d="M259.4,221.7 H334" stroke-width="2.6"/>
<path d="M255.5,244 H334" stroke-width="2.6"/>
<path d="M240,265.4 H334" stroke-width="2.6"/>
<path d="M263.3,285 H334" stroke-width="2.6"/>
<path d="M486.4,97 V120 H521 V153" stroke-width="2.8"/>
<path d="M436,153 H521" stroke-width="2.8"/>
<path d="M461,132.6 V153" stroke-width="2.4"/>
<path d="M436,183 H515 Q521,183 521,190 V204 Q521,210 515,210 H436" stroke-width="2.8"/>
<path d="M546,117 H596 V163" stroke-width="2.8"/>
<path d="M546,117 V217.3" stroke-width="3"/>
<path d="M546,165.5 H634" stroke-width="3"/>
<path d="M593,165.5 V187.5 M568,217 V187.5 H612 V217" stroke-width="2.4"/>
<path d="M546,217.3 H634" stroke-width="2.8"/>
<path d="M562,231.4 H634" stroke-width="2.6"/>
<path d="M574,217 V231.4" stroke-width="2.2"/>
<path d="M593,217 V231.4" stroke-width="2.2"/>
<path d="M621,217 V231.4" stroke-width="2.2"/>
<path d="M445.7,248.6 H544.4 V297" stroke-width="2.8"/>
<path d="M472.3,248.6 V273.7 H436" stroke-width="2.6"/>
<path d="M546,253.3 H634" stroke-width="2.8"/>
<path d="M585,253.3 V296" stroke-width="2.6"/>
<path d="M585,270.5 H634" stroke-width="2.6"/>
<path d="M565,273.7 V296" stroke-width="2.4"/>
<path d="M638,137 H696" stroke-width="2.6"/>
<path d="M638,188.7 H750.7" stroke-width="2.8"/>
<path d="M638,215.4 H677 V256 H638" stroke-width="2.6"/>
<path d="M638,235.8 H677" stroke-width="2.4"/>
<path d="M663,187 V146.4 H680 V165" stroke-width="2.4"/>
<path d="M702,187 V149.6 H724 V123 L750.7,121" stroke-width="2.4"/>
<path d="M730,124.5 V187" stroke-width="2.2"/>
<path d="M663,293.8 V281 Q671,272 680,281 V293.8" stroke-width="2.4"/>
<path d="M638,275 H677" stroke-width="2.4"/>
<path d="M750.7,115 H771 Q774,120 774,130 V178" stroke-width="2.4"/>
<path d="M765,148 H795" stroke-width="2.4"/>
<path d="M750.7,181 H795" stroke-width="2.4"/>
<path d="M750.7,201 H795" stroke-width="2.4"/>
<path d="M750.7,228 H795" stroke-width="2.4"/>
<path d="M750.7,248 H795" stroke-width="2.4"/>
<path d="M750.7,270 H795" stroke-width="2.4"/>
<path d="M777,225 V278" stroke-width="2.2"/>
<path d="M721.5,123 H752" stroke-width="2.2"/>
<path d="M55,314 H79 V353 H38 V330" stroke-width="2.4"/>
<path d="M81,308 V447" stroke-width="3"/>
<path d="M50,308 V328" stroke-width="2.2"/>
<path d="M0,359 H132.5" stroke-width="3"/>
<path d="M0,333 H7 V385.5 H0" stroke-width="2.4"/>
<path d="M85,359 V398.6 H123 V359" stroke-width="2.4"/>
<path d="M91,366 H112 V385.5 H91 Z" stroke-width="2.2"/>
<path d="M6,409 V447" stroke-width="2.6"/>
<path d="M184,409 V447" stroke-width="2.6"/>
<path d="M132.5,425 H107 V433 H132.5" stroke-width="2.2"/>
<path d="M132.5,328.3 H206 V344.2" stroke-width="2.8"/>
<path d="M132.5,348.6 H202.3 L211,345 L231.5,344" stroke-width="2.8"/>
<path d="M132.5,367.7 H182 V348.6" stroke-width="2.4"/>
<path d="M201,348.6 V383.5" stroke-width="2.4"/>
<path d="M202,367 H212.5" stroke-width="2.2"/>
<path d="M132.5,388 H232" stroke-width="2.8"/>
<path d="M132.5,434 H232" stroke-width="2.6"/>
<path d="M0,247.5 H31" stroke-width="2.6"/>
<path d="M284.5,305 V447" stroke-width="3"/>
<path d="M383.6,300 V447" stroke-width="3"/>
<path d="M240,334 H334" stroke-width="2.4"/>
<path d="M334,352 H434" stroke-width="2.4"/>
<path d="M240,372 H434" stroke-width="2.4"/>
<path d="M334,430 H434" stroke-width="2.2"/>
<path d="M434.5,349 H536" stroke-width="2.6"/>
<path d="M536,296 V397" stroke-width="3.2"/>
<path d="M536,316.7 H610 V336 H536" stroke-width="2.6"/>
<path d="M536,356 H634" stroke-width="2.8"/>
<path d="M536,377.5 H614" stroke-width="2.6"/>
<path d="M458,297 V349" stroke-width="2.4"/>
<path d="M472,349 V397" stroke-width="2.4"/>
<path d="M436,330 H536" stroke-width="2.2"/>
<path d="M570,396 Q573,420 577,447" stroke-width="2.4"/>
<path d="M598,356 V447" stroke-width="2.6"/>
<path d="M595,408 H634" stroke-width="2.4"/>
<path d="M502.5,397 V447" stroke-width="2.6"/>
<path d="M712.3,293.6 V354.4" stroke-width="2.8"/>
<path d="M712,314 H778" stroke-width="2.6"/>
<path d="M712,334 H778" stroke-width="2.6"/>
<path d="M697,354.4 H795" stroke-width="2.8"/>
<path d="M697,354 V373.5" stroke-width="2.4"/>
<path d="M638,372.3 H680 Q690,376 700,376 H759" stroke-width="2.8"/>
<path d="M738.6,354 V447" stroke-width="2.8"/>
<path d="M651.5,346 V370" stroke-width="2.2"/>
<path d="M675,346 V370" stroke-width="2.2"/>
<path d="M646.7,325.8 L656,315 H694.4 L701.6,325.8 H712" stroke-width="2.6"/>
<path d="M699,395 V416.5 Q706,410 713.5,420 V447" stroke-width="2.4"/>
<path d="M759,395 V447" stroke-width="2.6"/>
</g>
<path d="M0,102.5 L100,101.6 L232,99 L280,94.2 L400,90 L480,86.4 L590,81.5 L640,80.7 L800,80.5 L1159,89 L1159,99.5 L800,92 L640,92 L590,93 L480,97.6 L400,102.6 L280,108.8 L232,110.7 L100,108.5 L0,110 Z" fill="#f1b394" stroke="#e09372" stroke-width="1"/>
<path d="M232,104.5 L280,101.5 L400,96 L480,92" stroke="#e7a283" stroke-width="0.7" fill="none"/>
<path d="M32,108 V209.5 H0" stroke="#e09372" stroke-width="7.5" fill="none"/>
<path d="M32,108 V209.5 H0" stroke="#f1b394" stroke-width="5" fill="none"/>
<path d="M233.5,40 V447 M635,40 V447" stroke="#ec9f80" stroke-width="4.4" fill="none"/>
<path d="M233.5,40 V447 M635,40 V447" stroke="#f9e2d2" stroke-width="2" fill="none"/>
<path id="romap" d="M649,328 Q674,346 708,320" fill="none"/>
<text font-family="Liberation Sans" font-size="11.5" letter-spacing="0.5" fill="#43464e" stroke="#f3f0dc" stroke-width="2.2" paint-order="stroke" letter-spacing="0.8"><textPath href="#romap">Roma Ave</textPath></text>
<g font-family="Liberation Sans" >
<text x="257" y="153.4" font-size="11.5" letter-spacing="0.22" fill="none" stroke="#f3f0dc" stroke-width="2.4" stroke-linejoin="round">Esplanade Ln</text>
<text x="257" y="153.4" font-size="11.5" letter-spacing="0.22" fill="#43464e" stroke="#43464e" stroke-width="0.35">Esplanade Ln</text>
<text x="299" y="165.4" font-size="11.5" letter-spacing="0.32" fill="none" stroke="#f3f0dc" stroke-width="2.4" stroke-linejoin="round">E Pierson St</text>
<text x="299" y="165.4" font-size="11.5" letter-spacing="0.32" fill="#43464e" stroke="#43464e" stroke-width="0.35">E Pierson St</text>
<text x="300" y="185.7" font-size="11.5" letter-spacing="0.19" fill="none" stroke="#f3f0dc" stroke-width="2.4" stroke-linejoin="round">E Elm St</text>
<text x="300" y="185.7" font-size="11.5" letter-spacing="0.19" fill="#43464e" stroke="#43464e" stroke-width="0.35">E Elm St</text>
<text x="308" y="204.5" font-size="11.5" letter-spacing="0.36" fill="none" stroke="#f3f0dc" stroke-width="2.4" stroke-linejoin="round">E Highland Ave</text>
<text x="308" y="204.5" font-size="11.5" letter-spacing="0.36" fill="#43464e" stroke="#43464e" stroke-width="0.35">E Highland Ave</text>
<text x="566" y="169" font-size="11.5" letter-spacing="0.19" fill="none" stroke="#f3f0dc" stroke-width="2.4" stroke-linejoin="round">E Elm St</text>
<text x="566" y="169" font-size="11.5" letter-spacing="0.19" fill="#43464e" stroke="#43464e" stroke-width="0.35">E Elm St</text>
<text x="42" y="311.5" font-size="11.5" letter-spacing="0.56" fill="none" stroke="#f3f0dc" stroke-width="2.4" stroke-linejoin="round">E Campbell Ave</text>
<text x="42" y="311.5" font-size="11.5" letter-spacing="0.56" fill="#43464e" stroke="#43464e" stroke-width="0.35">E Campbell Ave</text>
<text x="461" y="300" font-size="11.5" letter-spacing="0.56" fill="none" stroke="#f3f0dc" stroke-width="2.4" stroke-linejoin="round">E Campbell Ave</text>
<text x="461" y="300" font-size="11.5" letter-spacing="0.56" fill="#43464e" stroke="#43464e" stroke-width="0.35">E Campbell Ave</text>
<text x="141" y="331.6" font-size="11.5" letter-spacing="0.22" fill="none" stroke="#f3f0dc" stroke-width="2.4" stroke-linejoin="round">E Sells Dr</text>
<text x="141" y="331.6" font-size="11.5" letter-spacing="0.22" fill="#43464e" stroke="#43464e" stroke-width="0.35">E Sells Dr</text>
<text x="136" y="351.4" font-size="11.5" letter-spacing="0.11" fill="none" stroke="#f3f0dc" stroke-width="2.4" stroke-linejoin="round">E Roma Ave</text>
<text x="136" y="351.4" font-size="11.5" letter-spacing="0.11" fill="#43464e" stroke="#43464e" stroke-width="0.35">E Roma Ave</text>
<text x="546" y="320.4" font-size="11.5" letter-spacing="0.22" fill="none" stroke="#f3f0dc" stroke-width="2.4" stroke-linejoin="round">E Sells Dr</text>
<text x="546" y="320.4" font-size="11.5" letter-spacing="0.22" fill="#43464e" stroke="#43464e" stroke-width="0.35">E Sells Dr</text>
<text x="140" y="391.8" font-size="11.5" letter-spacing="0.33" fill="none" stroke="#f3f0dc" stroke-width="2.4" stroke-linejoin="round">E Montecito Ave</text>
<text x="140" y="391.8" font-size="11.5" letter-spacing="0.33" fill="#43464e" stroke="#43464e" stroke-width="0.35">E Montecito Ave</text>
<text x="137" y="437.3" font-size="11.5" letter-spacing="0.25" fill="none" stroke="#f3f0dc" stroke-width="2.4" stroke-linejoin="round">E Heatherbrae Dr</text>
<text x="137" y="437.3" font-size="11.5" letter-spacing="0.25" fill="#43464e" stroke="#43464e" stroke-width="0.35">E Heatherbrae Dr</text>
<text x="0" y="413.5" font-size="11.5" letter-spacing="0.47" fill="none" stroke="#f3f0dc" stroke-width="2.4" stroke-linejoin="round">Glenrosa Ave</text>
<text x="0" y="413.5" font-size="11.5" letter-spacing="0.47" fill="#43464e" stroke="#43464e" stroke-width="0.35">Glenrosa Ave</text>
<text x="4" y="362.4" font-size="11.5" letter-spacing="0.35" fill="none" stroke="#f3f0dc" stroke-width="2.4" stroke-linejoin="round">Ave</text>
<text x="4" y="362.4" font-size="11.5" letter-spacing="0.35" fill="#43464e" stroke="#43464e" stroke-width="0.35">Ave</text>
<text x="0" y="210.5" font-size="11.5" letter-spacing="0.35" fill="none" stroke="#f3f0dc" stroke-width="2.4" stroke-linejoin="round">Ave</text>
<text x="0" y="210.5" font-size="11.5" letter-spacing="0.35" fill="#43464e" stroke="#43464e" stroke-width="0.35">Ave</text>
<text x="0" y="230.8" font-size="11.5" letter-spacing="0.35" fill="none" stroke="#f3f0dc" stroke-width="2.4" stroke-linejoin="round">e St</text>
<text x="0" y="230.8" font-size="11.5" letter-spacing="0.35" fill="#43464e" stroke="#43464e" stroke-width="0.35">e St</text>
<text x="0" y="251" font-size="11.5" letter-spacing="0.35" fill="none" stroke="#f3f0dc" stroke-width="2.4" stroke-linejoin="round">od St</text>
<text x="0" y="251" font-size="11.5" letter-spacing="0.35" fill="#43464e" stroke="#43464e" stroke-width="0.35">od St</text>
<text x="746.7" y="63.2" font-size="11.5" letter-spacing="0.35" fill="none" stroke="#f3f0dc" stroke-width="2.4" stroke-linejoin="round">E Pasadena</text>
<text x="746.7" y="63.2" font-size="11.5" letter-spacing="0.35" fill="#43464e" stroke="#43464e" stroke-width="0.35">E Pasadena</text>
<text x="743" y="86.3" font-size="11.5" letter-spacing="0.35" fill="none" stroke="#f3f0dc" stroke-width="2.4" stroke-linejoin="round">E Camelback</text>
<text x="743" y="86.3" font-size="11.5" letter-spacing="0.35" fill="#43464e" stroke="#43464e" stroke-width="0.35">E Camelback</text>
<text x="640" y="329" font-size="11.5" letter-spacing="0.35" fill="none" stroke="#f3f0dc" stroke-width="2.4" stroke-linejoin="round">E</text>
<text x="640" y="329" font-size="11.5" letter-spacing="0.35" fill="#43464e" stroke="#43464e" stroke-width="0.35">E</text>
<text x="464" y="423.6" font-size="11.5" letter-spacing="0.35" fill="none" stroke="#f3f0dc" stroke-width="2.4" stroke-linejoin="round">Los</text>
<text x="464" y="423.6" font-size="11.5" letter-spacing="0.35" fill="#7c8270" stroke="#7c8270" stroke-width="0.35">Los</text>
<text x="464" y="435.3" font-size="11.5" letter-spacing="0.35" fill="none" stroke="#f3f0dc" stroke-width="2.4" stroke-linejoin="round">Olivos</text>
<text x="464" y="435.3" font-size="11.5" letter-spacing="0.35" fill="#7c8270" stroke="#7c8270" stroke-width="0.35">Olivos</text>
<text x="36" y="100" font-size="11.5" letter-spacing="0.35" fill="none" stroke="#f3f0dc" stroke-width="2.4" stroke-linejoin="round" transform="rotate(-90 36 100)">N 20th St</text>
<text x="36" y="100" font-size="11.5" letter-spacing="0.35" fill="#43464e" stroke="#43464e" stroke-width="0.35" transform="rotate(-90 36 100)">N 20th St</text>
<text x="36" y="388.6" font-size="11.5" letter-spacing="0.35" fill="none" stroke="#f3f0dc" stroke-width="2.4" stroke-linejoin="round" transform="rotate(-90 36 388.6)">N 20th St</text>
<text x="36" y="388.6" font-size="11.5" letter-spacing="0.35" fill="#43464e" stroke="#43464e" stroke-width="0.35" transform="rotate(-90 36 388.6)">N 20th St</text>
<text x="86" y="433" font-size="11.5" letter-spacing="0.35" fill="none" stroke="#f3f0dc" stroke-width="2.4" stroke-linejoin="round" transform="rotate(-90 86 433)">N 21st St</text>
<text x="86" y="433" font-size="11.5" letter-spacing="0.35" fill="#43464e" stroke="#43464e" stroke-width="0.35" transform="rotate(-90 86 433)">N 21st St</text>
<text x="136.5" y="156" font-size="11.5" letter-spacing="0.35" fill="none" stroke="#f3f0dc" stroke-width="2.4" stroke-linejoin="round" transform="rotate(-90 136.5 156)">N 22nd St</text>
<text x="136.5" y="156" font-size="11.5" letter-spacing="0.35" fill="#43464e" stroke="#43464e" stroke-width="0.35" transform="rotate(-90 136.5 156)">N 22nd St</text>
<text x="239" y="329" font-size="11.5" letter-spacing="0.35" fill="none" stroke="#f3f0dc" stroke-width="2.4" stroke-linejoin="round" transform="rotate(-90 239 329)">N 24th St</text>
<text x="239" y="329" font-size="11.5" letter-spacing="0.35" fill="#43464e" stroke="#43464e" stroke-width="0.35" transform="rotate(-90 239 329)">N 24th St</text>
<text x="339" y="262" font-size="11.5" letter-spacing="0.35" fill="none" stroke="#f3f0dc" stroke-width="2.4" stroke-linejoin="round" transform="rotate(-90 339 262)">N 26th St</text>
<text x="339" y="262" font-size="11.5" letter-spacing="0.35" fill="#43464e" stroke="#43464e" stroke-width="0.35" transform="rotate(-90 339 262)">N 26th St</text>
<text x="438" y="157" font-size="11.5" letter-spacing="0.48" fill="none" stroke="#f3f0dc" stroke-width="2.4" stroke-linejoin="round" transform="rotate(-90 438 157)">N 28th St</text>
<text x="438" y="157" font-size="11.5" letter-spacing="0.48" fill="#43464e" stroke="#43464e" stroke-width="0.35" transform="rotate(-90 438 157)">N 28th St</text>
<text x="639" y="99.7" font-size="11.5" letter-spacing="0.68" fill="none" stroke="#f3f0dc" stroke-width="2.4" stroke-linejoin="round" transform="rotate(-90 639 99.7)">N 32nd St</text>
<text x="639" y="99.7" font-size="11.5" letter-spacing="0.68" fill="#43464e" stroke="#43464e" stroke-width="0.35" transform="rotate(-90 639 99.7)">N 32nd St</text>
<text x="550" y="193" font-size="11.5" letter-spacing="0" fill="none" stroke="#f3f0dc" stroke-width="2.4" stroke-linejoin="round" transform="rotate(-90 550 193)">N 30th Pl</text>
<text x="550" y="193" font-size="11.5" letter-spacing="0" fill="#43464e" stroke="#43464e" stroke-width="0.35" transform="rotate(-90 550 193)">N 30th Pl</text>
<text x="540.6" y="371" font-size="11.5" letter-spacing="0.35" fill="none" stroke="#f3f0dc" stroke-width="2.4" stroke-linejoin="round" transform="rotate(-90 540.6 371)">N 30th St</text>
<text x="540.6" y="371" font-size="11.5" letter-spacing="0.35" fill="#43464e" stroke="#43464e" stroke-width="0.35" transform="rotate(-90 540.6 371)">N 30th St</text>
<text x="605" y="410" font-size="11.5" letter-spacing="0.35" fill="none" stroke="#f3f0dc" stroke-width="2.4" stroke-linejoin="round" transform="rotate(-90 605 410)">N 31st Pl</text>
<text x="605" y="410" font-size="11.5" letter-spacing="0.35" fill="#43464e" stroke="#43464e" stroke-width="0.35" transform="rotate(-90 605 410)">N 31st Pl</text>
<text x="640" y="445.6" font-size="11.5" letter-spacing="0.68" fill="none" stroke="#f3f0dc" stroke-width="2.4" stroke-linejoin="round" transform="rotate(-90 640 445.6)">N 32nd St</text>
<text x="640" y="445.6" font-size="11.5" letter-spacing="0.68" fill="#43464e" stroke="#43464e" stroke-width="0.35" transform="rotate(-90 640 445.6)">N 32nd St</text>
<text x="782.6" y="391" font-size="11.5" letter-spacing="0.35" fill="none" stroke="#f3f0dc" stroke-width="2.4" stroke-linejoin="round" transform="rotate(-90 782.6 391)">N 35th St</text>
<text x="782.6" y="391" font-size="11.5" letter-spacing="0.35" fill="#43464e" stroke="#43464e" stroke-width="0.35" transform="rotate(-90 782.6 391)">N 35th St</text>
<text x="755" y="181" font-size="11.5" letter-spacing="0.35" fill="none" stroke="#f3f0dc" stroke-width="2.4" stroke-linejoin="round" transform="rotate(-90 755 181)">N 34th Pl</text>
<text x="755" y="181" font-size="11.5" letter-spacing="0.35" fill="#43464e" stroke="#43464e" stroke-width="0.35" transform="rotate(-90 755 181)">N 34th Pl</text>
<text x="728.5" y="292" font-size="11.5" letter-spacing="0.35" fill="none" stroke="#f3f0dc" stroke-width="2.4" stroke-linejoin="round" transform="rotate(-90 728.5 292)">N 34th St</text>
<text x="728.5" y="292" font-size="11.5" letter-spacing="0.35" fill="#43464e" stroke="#43464e" stroke-width="0.35" transform="rotate(-90 728.5 292)">N 34th St</text>
<text x="410" y="402.5" font-size="11.5" letter-spacing="0.35" fill="none" stroke="#f3f0dc" stroke-width="2.4" stroke-linejoin="round">E Glenrosa Ave</text>
<text x="410" y="402.5" font-size="11.5" letter-spacing="0.35" fill="#43464e" stroke="#43464e" stroke-width="0.35">E Glenrosa Ave</text>
<text x="783" y="298" font-size="11.5" letter-spacing="0.3" fill="none" stroke="#f3f0dc" stroke-width="2.4" stroke-linejoin="round">E</text>
<text x="783" y="298" font-size="11.5" letter-spacing="0.3" fill="#43464e" stroke="#43464e" stroke-width="0.35">E</text>
<text x="289" y="402" font-size="11.5" letter-spacing="0.35" fill="none" stroke="#f3f0dc" stroke-width="2.4" stroke-linejoin="round" transform="rotate(-90 289 402)">N 25th St</text>
<text x="289" y="402" font-size="11.5" letter-spacing="0.35" fill="#43464e" stroke="#43464e" stroke-width="0.35" transform="rotate(-90 289 402)">N 25th St</text>
<text x="388" y="402" font-size="11.5" letter-spacing="0.35" fill="none" stroke="#f3f0dc" stroke-width="2.4" stroke-linejoin="round" transform="rotate(-90 388 402)">N 27th St</text>
<text x="388" y="402" font-size="11.5" letter-spacing="0.35" fill="#43464e" stroke="#43464e" stroke-width="0.35" transform="rotate(-90 388 402)">N 27th St</text>
<text x="689" y="444" font-size="11.5" letter-spacing="0.35" fill="none" stroke="#f3f0dc" stroke-width="2.4" stroke-linejoin="round" transform="rotate(-90 689 444)">33rd</text>
<text x="689" y="444" font-size="11.5" letter-spacing="0.35" fill="#43464e" stroke="#43464e" stroke-width="0.35" transform="rotate(-90 689 444)">33rd</text>
<text x="690" y="420" font-size="11.5" letter-spacing="0.35" fill="none" stroke="#f3f0dc" stroke-width="2.4" stroke-linejoin="round" transform="rotate(-20 690 420)">St</text>
<text x="690" y="420" font-size="11.5" letter-spacing="0.35" fill="#43464e" stroke="#43464e" stroke-width="0.35" transform="rotate(-20 690 420)">St</text>
<text x="563.6" y="96" font-size="11.5" letter-spacing="0.17" fill="none" stroke="#f3f0dc" stroke-width="2.4" stroke-linejoin="round" transform="rotate(90 563.6 96)">N 31st St</text>
<text x="563.6" y="96" font-size="11.5" letter-spacing="0.17" fill="#43464e" stroke="#43464e" stroke-width="0.35" transform="rotate(90 563.6 96)">N 31st St</text>
<text x="452.5" y="300" font-size="11.5" letter-spacing="0.35" fill="none" stroke="#f3f0dc" stroke-width="2.4" stroke-linejoin="round" transform="rotate(90 452.5 300)">N 28th Pl</text>
<text x="452.5" y="300" font-size="11.5" letter-spacing="0.35" fill="#43464e" stroke="#43464e" stroke-width="0.35" transform="rotate(90 452.5 300)">N 28th Pl</text>
</g>
<circle cx="433.8" cy="246.3" r="13.4" fill="#f6ef8e" stroke="#333" stroke-width="1.2"/>
<circle cx="433.8" cy="246.3" r="6.2" fill="#2f9a1e" stroke="#1f3f1a" stroke-width="1"/>
<circle cx="433.8" cy="246.3" r="1.2" fill="#111"/>
<circle cx="724" cy="240" r="13.4" fill="#f6ef8e" stroke="#333" stroke-width="1.2"/>
<circle cx="724" cy="240" r="6.2" fill="#2f9a1e" stroke="#1f3f1a" stroke-width="1"/>
<circle cx="724" cy="240" r="1.2" fill="#111"/>
<circle cx="52" cy="306.7" r="6" fill="#2f9a1e"/><circle cx="52" cy="306.7" r="1.2" fill="#111"/>
<rect x="25" y="411.4" width="122" height="5.2" fill="#fff" stroke="#222" stroke-width="1"/>
<rect x="25" y="411.4" width="30.5" height="2.6" fill="#222"/><rect x="55.5" y="414" width="30.5" height="2.6" fill="#222"/>
<rect x="86" y="411.4" width="30.5" height="2.6" fill="#222"/><rect x="116.5" y="414" width="30.5" height="2.6" fill="#222"/>
<g font-family="Liberation Sans" font-weight="bold" font-size="12.5" fill="#5b6170" stroke="#f4f1e0" stroke-width="1.5" paint-order="stroke">
<text x="24" y="426">0</text><text x="80" y="426" letter-spacing="0.6">0.15</text><text x="142" y="426" letter-spacing="0.6">0.3mi</text></g>
<rect x="207.5" y="407" width="12.5" height="12.5" fill="#eef" stroke="#667" stroke-width="1"/><rect x="212" y="412" width="7" height="6" fill="#8cb0a0"/>
<text x="229" y="418" font-family="Liberation Sans" font-size="14" letter-spacing="0.15" fill="#9a9aa8">38.507325&#160;&#160;-112.038022&#160;Degrees</text>
<path d="M436,417 L440,412 L444,417 Z" fill="#6a90d0"/>
<rect x="706" y="426.5" width="95" height="16.5" fill="#f4f2e8" opacity="0.75"/>
<text x="711.5" y="439" font-family="Liberation Sans" font-size="14" letter-spacing="0.6" fill="#555">City of Phoenix</text>
<rect x="548" y="430.3" width="62" height="17" fill="#ececec"/>
<path d="M574,435 H584 L579,441 Z" fill="#111"/>
<rect x="795" y="441" width="364" height="6" fill="url(#houses)"/>
<rect x="891.5" y="441" width="1.2" height="6" fill="#e49a7a"/>
<rect x="917.7" y="441" width="1.2" height="6" fill="#e49a7a"/>
<rect x="930.8" y="441" width="1.2" height="6" fill="#e49a7a"/>
<rect x="943.9" y="441" width="1.2" height="6" fill="#e49a7a"/>
<rect x="970.2" y="441" width="1.2" height="6" fill="#e49a7a"/>
<rect x="993.1" y="441" width="1.2" height="6" fill="#e49a7a"/>
<rect x="1019.3" y="441" width="1.2" height="6" fill="#e49a7a"/>
<rect x="1045.6" y="441" width="1.2" height="6" fill="#e49a7a"/>
<rect x="1057.0" y="441" width="1.2" height="6" fill="#e49a7a"/>
<rect x="1083.3" y="441" width="1.2" height="6" fill="#e49a7a"/>
<rect x="1121.0" y="441" width="1.2" height="6" fill="#e49a7a"/>
<rect x="1143.9" y="441" width="1.2" height="6" fill="#e49a7a"/>
</svg>
</div>

<!-- map controls -->
<div class="abs" style="left:7px;top:46px;width:30px;height:58px;background:rgba(115,115,100,.32);border-radius:4px 4px 0 0"></div>
<div class="abs" style="left:7px;top:73px;width:30px;height:1px;background:rgba(60,60,60,.6)"></div>
<svg class="abs" style="left:7px;top:46px" width="30" height="58" viewBox="0 0 30 58">
  <path d="M15,6.5 V21.5 M7.5,14 H22.5" stroke="#fff" stroke-width="2.2"/>
  <path d="M9.5,42 H19.5" stroke="#fff" stroke-width="2.2"/>
</svg>
<div class="abs" style="left:7px;top:115px;width:30px;height:29px;background:rgba(115,115,100,.32);border-radius:4px"></div>
<svg class="abs" style="left:7px;top:115px" width="30" height="29" viewBox="0 0 30 29">
  <path d="M15,5 L25,14 H22 V24 H17.5 V18 H12.5 V24 H8 V14 H5 Z" fill="#f4f4f4"/>
</svg>
<div class="abs" style="left:7px;top:150px;width:30px;height:30px;background:rgba(115,115,100,.32);border-radius:4px"></div>
<svg class="abs" style="left:7px;top:150px" width="30" height="30" viewBox="0 0 30 30">
  <circle cx="15" cy="15" r="8.5" stroke="#f4f4f4" stroke-width="1.6" fill="none"/>
  <path d="M15,4 V9 M15,21 V26 M4,15 H9 M21,15 H26" stroke="#f4f4f4" stroke-width="1.6"/>
</svg>

<!-- search box -->
<div class="abs" style="left:55px;top:45px;width:241px;height:34px;background:#fff;border:1px solid #555;border-radius:4px"></div>
<div class="abs" style="left:262px;top:46px;width:1px;height:32px;background:#444"></div>
<div class="abs" style="left:68px;top:54px;font-size:15px;color:#8f96a6;letter-spacing:0.2px">World</div>
<svg class="abs" style="left:270px;top:53px" width="18" height="18" viewBox="0 0 18 18">
  <circle cx="7" cy="7" r="5" stroke="#283b55" stroke-width="1.8" fill="none"/>
  <path d="M10.6,10.6 L15.5,15.5" stroke="#283b55" stroke-width="2.4" stroke-linecap="round"/>
</svg>

<div id="hdr">
  <svg class="abs" style="left:13px;top:6px" width="28" height="28" viewBox="0 0 28 28">
    <circle cx="14" cy="14" r="13" fill="#1d2a78" stroke="#d21f3c" stroke-width="1.4"/>
    <circle cx="14" cy="14" r="9.2" fill="none" stroke="#8a93c8" stroke-width="2.2" stroke-dasharray="1.2 1"/>
    <path d="M8.5,8.5 H19.5 V15 Q19.5,20.5 14,22.5 Q8.5,20.5 8.5,15 Z" fill="#f0ead0"/>
    <rect x="9.5" y="11" width="4.3" height="4.3" fill="#d8333c"/><rect x="14.2" y="11" width="4.3" height="4.3" fill="#5aa35a"/>
    <path d="M9.5,15.6 H13.8 V21 Q10.5,19.5 9.5,16.5 Z" fill="#6cb06a"/><path d="M14.2,15.6 H18.5 V16.5 Q17.5,19.5 14.2,21 Z" fill="#d8333c"/>
    <ellipse cx="6.3" cy="14" rx="1.2" ry="3.2" fill="#a8cf78"/>
    <ellipse cx="21.7" cy="14" rx="1.2" ry="3.2" fill="#a8cf78"/>
  </svg>
  <div id="title">Enhanced Search 1.2</div>
  <div class="hlink" style="left:349px;top:12px;font-size:13px">Foldable Theme</div>
  <div class="hlink" style="left:486px;top:11px;font-size:15.5px">Map Gallery</div>

  <div class="dv" style="left:753px"></div><div class="dv" style="left:793px"></div><div class="dv" style="left:833px"></div>
  <div class="dv" style="left:873px"></div><div class="dv" style="left:913px"></div><div class="dv" style="left:953px"></div>
  <div class="dv" style="left:993px"></div><div class="dv" style="left:1033px"></div><div class="dv" style="left:1073px"></div>
  <div class="abs" style="left:1113px;top:0;width:41px;height:40px;background:#8fb4b4;border-top:2px solid #8b9db0"></div>
  <svg class="abs" style="left:700px;top:0" width="459" height="40" viewBox="700 0 459 40">
   <g fill="#bcd2bb" stroke="none">
    <path d="M720.5,13.5 L723.3,8 L726,13.5 Z"/><rect x="720.5" y="17.8" width="5" height="4.8"/><circle cx="723.3" cy="29.6" r="2.5"/>
    <rect x="727.8" y="9" width="17.3" height="2.6"/><rect x="727.8" y="18.8" width="17.3" height="2.6"/><rect x="727.8" y="28.4" width="17.3" height="2.6"/>
    <path d="M772.5,8 L784,15 L772.5,22 L761,15 Z"/>
    <path d="M761,19 L772.5,26 L784,19 L784,21.5 L772.5,28.5 L761,21.5 Z"/>
    <path d="M761,24.5 L772.5,31.5 L784,24.5 L784,27 L772.5,34 L761,27 Z"/>
    <path d="M801.5,15 L813,8 L825,11.5 L813.5,18.5 Z"/>
    <path d="M801.5,15 Q799,21 803,24.5 L806,25.5 L824.5,18 L825,20.5 L806,27 Q800,26 799.8,20 Q800,16.5 801.5,15 Z"/>
    <path d="M805,18.5 L810.8,17.5 L810.8,31 L808,28.3 L805,31 Z"/>
    <path d="M841.15,25.4 L859.65,8.4 L864.35,13.6 L845.85,30.6 Z"/>
    <path d="M894,11 C901,11 905.3,15.5 905.3,20.5 C905.3,26 900.5,30 894,30 C887.5,30 882.5,27 881.5,23.5 C884.5,23 886.5,21.5 886.5,19 C886.5,16.5 884,15.3 882,15.6 C884,12.7 888.5,11 894,11 Z"/>
    <rect x="887.6" y="8.5" width="2.3" height="23"/>
    <path d="M925.2,7.5 H941.2 V16 H939.6 V9.1 H926.8 V16 H925.2 Z"/>
    <path d="M923,14.5 H942.5 Q944.8,14.5 944.8,17 V27.5 H941.2 V23.2 H925.2 V27.5 H921.3 V17 Q921.3,14.5 923,14.5 Z"/>
    <path d="M925.2,23.2 H941.2 V31.6 H925.2 Z M926.8,24.8 V30 H939.6 V24.8 Z" fill-rule="evenodd"/>
    <rect x="928" y="27.3" width="10" height="1.3"/>
    <path d="M1001,11.8 C1001,9 1006,7.6 1013,7.6 C1020,7.6 1025,9 1025,11.8 C1025,13 1024,14 1022.5,15 L1016.2,24.5 V31.5 H1010 V24.5 L1003.5,15 C1002,14 1001,13 1001,11.8 Z"/>
    <path d="M1041,32 L1047,24 L1049.5,26 L1053.5,16 L1057,18.5 L1063,11.5 L1063.5,31.5 Z"/>
    <rect x="1041" y="8" width="1.2" height="24.5"/><rect x="1041" y="31.3" width="24" height="1.2"/>
    <rect x="1081" y="8" width="10.8" height="10.8"/><rect x="1094.3" y="8" width="10.8" height="10.8"/>
    <rect x="1081" y="21.3" width="10.8" height="10.8"/><rect x="1094.3" y="21.3" width="10.8" height="10.8"/>
    <text x="960.5" y="15" font-size="9.5" font-weight="bold" font-family="Liberation Sans">A</text>
    <text x="979.5" y="31.5" font-size="9.5" font-weight="bold" font-family="Liberation Sans">B</text>
   </g>
   <g fill="none" stroke="#bcd2bb" stroke-width="2.2">
    <path d="M968.5,12 H979 Q983,12 982,16 Q981,20 977,20 H968 Q963.5,20 963,24 Q963,28 967,28 H979" stroke-dasharray="2.6 1.6"/>
   </g>
   <g fill="none" stroke="#2a7033">
    <path d="M842.26,24.39 l1.74,1.92 M844.18,22.65 l1.14,1.26 M846.11,20.91 l1.74,1.92 M848.03,19.17 l1.14,1.26 M849.96,17.43 l1.74,1.92 M851.88,15.68 l1.14,1.26 M853.80,13.94 l1.74,1.92 M855.73,12.20 l1.14,1.26" stroke-width="0.9"/>
    <path d="M1003,11.8 C1003,10.4 1007,9.4 1013,9.4 C1019,9.4 1023,10.4 1023,11.8 C1023,13.2 1019,14.2 1013,14.2 C1007,14.2 1003,13.2 1003,11.8 Z" fill="#2a7033" stroke="none"/>
    <path d="M886.6,8 V32 M890.9,8 V32" stroke-width="0.9"/>
   </g>
   <g fill="#2a7033">
     <circle cx="895.5" cy="14.5" r="1.9"/><circle cx="900" cy="19.7" r="1.9"/><circle cx="897" cy="25.4" r="1.9"/><circle cx="892.8" cy="19.3" r="1.6"/>
     <circle cx="940.3" cy="19.4" r="1.1"/>
     <path d="M1098.5,10.5 h4.5 l-3,5.5 h3" stroke="#2a7033" stroke-width="1.4" fill="none"/>
   </g>
   <circle cx="1131.5" cy="18.5" r="7.8" stroke="#fff" stroke-width="3" fill="none"/>
   <path d="M1137,24 L1144,31" stroke="#fff" stroke-width="3.8" stroke-linecap="round"/>
   <path d="M1144.5,7 q-2,2 -2.5,4.5" stroke="#fff" stroke-width="0.8" fill="none"/>
  </svg>
</div>

<!-- panel -->
<div id="panel">
  <div class="abs" style="left:0;top:0;width:358px;height:35px;background:#2a7033"></div>
  <div class="abs" style="left:16px;top:8px;font:bold 18px 'Liberation Sans',sans-serif;color:#fff;white-space:nowrap;-webkit-text-stroke:0.3px #fff">Enhanced Search</div>
  <svg class="abs" style="left:299px;top:13px" width="14" height="11" viewBox="0 0 14 11">
    <path d="M1.5,6 L7,1.5 L12.5,6 M1.5,10 L7,5.5 L12.5,10" stroke="#fff" stroke-width="2" fill="none"/>
  </svg>
  <svg class="abs" style="left:335px;top:13px" width="11" height="11" viewBox="0 0 11 11">
    <path d="M1,1 L10,10 M10,1 L1,10" stroke="#fff" stroke-width="2.2"/>
  </svg>
  <div class="ptab" style="left:0;width:90px;padding-left:12px">By Shape</div>
  <div class="ptab" style="left:91px;width:88.6px;padding-left:10px;letter-spacing:1.1px">By Attribut</div>
  <div class="ptab" style="left:180.6px;width:88.4px;padding-left:10.4px">By Spatial</div>
  <div class="abs" style="left:269px;top:35px;width:89px;height:2px;background:#7f8aa6"></div>
  <div class="abs" style="left:288px;top:36px;font-size:14.5px;letter-spacing:0.5px;color:#8a92a2;line-height:30px">Results</div>
  <div class="abs" style="left:225px;top:80px;font-size:15px;word-spacing:3px;color:#1f1fd8;text-decoration:underline;white-space:nowrap">Zoom All</div>
  <div class="abs" style="left:298px;top:80px;font-size:15px;color:#1f1fd8;text-decoration:underline">Clear</div>
  <div class="abs" style="left:14px;top:102px;width:330px;height:1px;background:#999"></div>
  <div class="gt" style="left:14px;top:110px;font-size:12.5px;letter-spacing:0.3px">Features selected: 2</div>
  <div class="abs" style="left:14px;top:202px;width:330px;height:72px;background:#e8e8e8"></div>
  <svg class="abs" style="left:16px;top:152px" width="30" height="30" viewBox="0 0 30 30">
    <circle cx="15" cy="13.8" r="13" fill="#f6ee8c" stroke="#444" stroke-width="1.3"/>
    <circle cx="15" cy="13.8" r="5.8" fill="#f6ee8c" stroke="#444" stroke-width="1.6"/>
  </svg>
  <svg class="abs" style="left:16px;top:224px" width="30" height="30" viewBox="0 0 30 30">
    <circle cx="15" cy="13.8" r="13" fill="#f6ee8c" stroke="#444" stroke-width="1.3"/>
    <circle cx="15" cy="13.8" r="5.8" fill="#f6ee8c" stroke="#444" stroke-width="1.6"/>
  </svg>
  <div class="gt" style="left:54px;top:137px;font:bold 12px 'Liberation Sans',sans-serif;letter-spacing:0.75px;color:#7d7d7d">BILTMORE PREPARATORY ACADEMY</div>
  <div class="gt" style="left:54px;top:161px;font-size:12px;letter-spacing:0.6px"><span class="it">Address</span>: 4601 N 34TH ST PHOENIX AZ 85018</div>
  <div class="gt" style="left:54px;top:183px;font-size:12px;letter-spacing:0.6px"><span class="it">County</span>: MARICOPA</div>
  <div class="gt" style="left:54px;top:209px;font:bold 12px 'Liberation Sans',sans-serif;letter-spacing:0.75px;color:#7d7d7d">CAMELBACK HIGH SCHOOL</div>
  <div class="gt" style="left:54px;top:233px;font-size:12px;letter-spacing:0.6px"><span class="it">Address</span>: 4612 N 28TH ST PHOENIX AZ 85016</div>
  <div class="gt" style="left:54px;top:255px;font-size:12px;letter-spacing:0.6px"><span class="it">County</span>: MARICOPA</div>
</div>

<!-- attribute table -->
<div id="att"></div>
<div class="abs" style="left:7px;top:458px;width:1141px;height:206px;background:#fff"></div>
<div class="abs" style="left:7px;top:458px;width:1141px;height:23px;background:linear-gradient(#f2f2f2,#e7e7e7);border-bottom:1px solid #c8ccd2"></div>
<div class="abs" style="left:7px;top:481px;width:1141px;height:31px;background:#ececec;border-bottom:1px solid #c9ccd0"></div>
<div class="abs" style="left:7px;top:458px;width:8px;height:206px;background:linear-gradient(90deg,rgba(0,0,0,.18),rgba(0,0,0,0))"></div>
<svg class="abs" style="left:12px;top:461px" width="13" height="13" viewBox="0 0 13 13" fill="#555">
  <rect x="0" y="0" width="3.3" height="3.3"/><rect x="4.8" y="0" width="3.3" height="3.3"/><rect x="9.6" y="0" width="3.3" height="3.3"/>
  <rect x="0" y="4.8" width="3.3" height="3.3"/><rect x="4.8" y="4.8" width="3.3" height="3.3"/><rect x="9.6" y="4.8" width="3.3" height="3.3"/>
  <rect x="0" y="9.6" width="3.3" height="3.3"/><rect x="4.8" y="9.6" width="3.3" height="3.3"/><rect x="9.6" y="9.6" width="3.3" height="3.3"/>
</svg>
<div class="tbt" style="left:28px">Options</div>
<svg class="abs" style="left:79px;top:464px" width="11" height="7" viewBox="0 0 11 7"><path d="M0.5,0.5 H10.5 L5.5,6.5 Z" fill="#3f6fa8"/></svg>
<svg class="abs" style="left:100px;top:460px" width="12" height="15" viewBox="0 0 12 15"><path d="M6,14.5 L1.5,8 A5,5 0 1 1 10.5,8 Z" fill="#666"/><circle cx="6" cy="5.5" r="1.8" fill="#e9e9e9"/></svg>
<div class="tbt" style="left:116px;color:#9a9a9a">Zoom to</div>
<svg class="abs" style="left:178px;top:461px" width="13" height="13" viewBox="0 0 13 13"><rect x="0.6" y="0.6" width="11.8" height="11.8" fill="none" stroke="#555" stroke-width="1.2"/><path d="M3,3 L10,10 M10,3 L3,10" stroke="#555" stroke-width="1.3"/></svg>
<div class="tbt" style="left:195px">Clear Selection</div>
<svg class="abs" style="left:293px;top:460px" width="14" height="14" viewBox="0 0 14 14"><path d="M11.5,4.5 A5.3,5.3 0 1 0 12.3,8" fill="none" stroke="#555" stroke-width="1.7"/><path d="M8.5,1.5 L12.8,1.5 L12.8,5.8 Z" fill="#555"/></svg>
<div class="tbt" style="left:310px">Refresh</div>
<svg class="abs" style="left:1134px;top:461px" width="13" height="13" viewBox="0 0 13 13"><path d="M1.5,1.5 L11.5,11.5 M11.5,1.5 L1.5,11.5" stroke="#9aa0a8" stroke-width="2.4"/></svg>

<div class="ttab" style="left:5px;width:55px">Schools</div>
<div class="ttab" style="left:61px;width:72px">ZIP Codes</div>
<div class="ttab" style="left:135px;width:59px">Places</div>
<div class="ttab" style="left:196px;width:65px">Counties</div>
<div class="abs" style="left:263px;top:482px;width:173px;height:31px;background:#fff;border:1px solid #c6d4e6;border-bottom:none"></div>
<div class="abs" style="left:270px;top:493px;font-size:13px;color:#333;white-space:nowrap">Search Results: Schools</div>
<svg class="abs" style="left:423px;top:495px" width="9" height="9" viewBox="0 0 9 9"><path d="M1,1 L8,8 M8,1 L1,8" stroke="#8a8a8a" stroke-width="1.8"/></svg>

<!-- grid -->
<div class="abs" style="left:9px;top:520px;width:1117px;height:22px;background:linear-gradient(#f0f0f0,#e6e6e6);border-bottom:1px solid #d6d6d6;border-top:1px solid #ddd"></div>
<div class="abs" style="left:9px;top:587px;width:1117px;height:44px;background:#f6f6f6"></div>
<div class="abs" style="left:233px;top:520px;width:1px;height:111px;background:#c8c8c8"></div>
<div class="abs" style="left:456px;top:520px;width:1px;height:111px;background:#c8c8c8"></div>
<div class="abs" style="left:679px;top:520px;width:1px;height:111px;background:#c8c8c8"></div>
<div class="abs" style="left:902px;top:520px;width:1px;height:111px;background:#c8c8c8"></div>
<div class="abs" style="left:1125px;top:520px;width:1px;height:111px;background:#c8c8c8"></div>
<div class="abs" style="left:1126px;top:520px;width:21px;height:123px;background:#ececec"></div>
<div class="abs" style="left:9px;top:646px;width:1138px;height:1px;background:#d0d0d0"></div>
<div class="hcell" style="left:15px">Name</div>
<div class="hcell" style="left:238px">Address</div>
<div class="hcell" style="left:460px">County</div>
<div class="hcell" style="left:683px">Number of Students</div>
<div class="hcell" style="left:906px">Number of Teachers</div>
<svg class="abs" style="left:1132px;top:522px" width="14" height="14" viewBox="0 0 14 14"><circle cx="7" cy="7" r="6.5" fill="#111"/><path d="M7,3.5 V10.5 M3.5,7 H10.5" stroke="#fff" stroke-width="2"/></svg>
<svg class="abs" style="left:1133px;top:551px" width="9" height="6" viewBox="0 0 9 6"><path d="M0.5,5.5 L4.5,0.5 L8.5,5.5 Z" fill="#b0b0b0"/></svg>
<svg class="abs" style="left:1133px;top:633px" width="9" height="6" viewBox="0 0 9 6"><path d="M0.5,0.5 L4.5,5.5 L8.5,0.5 Z" fill="#b0b0b0"/></svg>

<div class="cell" style="left:13px;top:551px;letter-spacing:0.05px">BILTMORE PREPARATORY ACADEMY</div>
<div class="cell" style="left:237px;top:551px">4601 N 34TH ST PHOENIX AZ<br>85018</div>
<div class="cell" style="left:460px;top:551px">MARICOPA</div>
<div class="cell" style="left:683px;top:551px">284</div>
<div class="cell" style="left:906px;top:551px">19</div>
<div class="cell" style="left:13px;top:595px;letter-spacing:0.05px">CAMELBACK HIGH SCHOOL</div>
<div class="cell" style="left:237px;top:595px">4612 N 28TH ST PHOENIX AZ<br>85016</div>
<div class="cell" style="left:460px;top:595px">MARICOPA</div>
<div class="cell" style="left:683px;top:595px">1,862</div>
<div class="cell" style="left:906px;top:595px">107</div>
<div class="cell" style="left:9px;top:649px;font-size:12.5px;letter-spacing:0.45px">2 features 0 selected</div>

<div class="abs" style="left:7px;top:458px;width:1141px;height:5px;background:linear-gradient(rgba(0,0,0,.16),rgba(0,0,0,0))"></div>
<!-- red annotation -->
<div class="abs" style="left:3px;top:454px;width:1150px;height:214px;border:4px solid #f20000;box-shadow:1px 1px 3px rgba(0,0,0,.35)"></div>

<!-- callout -->
<svg class="abs" style="left:225px;top:318px" width="260" height="145" viewBox="225 318 260 145">
  <defs>
    <linearGradient id="cg" x1="0" y1="0" x2="0" y2="1">
      <stop offset="0" stop-color="#d6d8f4" stop-opacity="0.72"/>
      <stop offset="0.45" stop-color="#b4b8ee" stop-opacity="0.74"/>
      <stop offset="1" stop-color="#9498e2" stop-opacity="0.84"/>
    </linearGradient>
    <filter id="ts" x="-10%" y="-30%" width="120%" height="160%"><feGaussianBlur stdDeviation="2"/></filter>
    <filter id="bs" x="-10%" y="-10%" width="125%" height="130%"><feGaussianBlur stdDeviation="1.5"/></filter>
  </defs>
  <path d="M246,327 H464 Q474,327 474,337 V416 Q474,426 464,426 H371.6 Q350,437 322,455 Q333,440 339.7,426 H246 Q236,426 236,416 V337 Q236,327 246,327 Z" transform="translate(2,2.5)" fill="none" stroke="#000" stroke-opacity="0.35" stroke-width="3" filter="url(#bs)"/>
  <path d="M246,327 H464 Q474,327 474,337 V416 Q474,426 464,426 H371.6 Q350,437 322,455 Q333,440 339.7,426 H246 Q236,426 236,416 V337 Q236,327 246,327 Z" fill="url(#cg)" stroke="#5058a6" stroke-width="3"/>
  <g font-family="Liberation Sans" font-weight="bold" font-size="23">
    <g fill="#222" opacity="0.55" filter="url(#ts)" transform="translate(3,4)">
      <text x="270" y="368.5" letter-spacing="0.45">Attribute Table</text>
      <text x="251" y="394">opens immediately</text>
    </g>
    <g fill="#850f12">
      <text x="270" y="368.5" letter-spacing="0.45">Attribute Table</text>
      <text x="251" y="394">opens immediately</text>
    </g>
  </g>
</svg>

</body></html>
